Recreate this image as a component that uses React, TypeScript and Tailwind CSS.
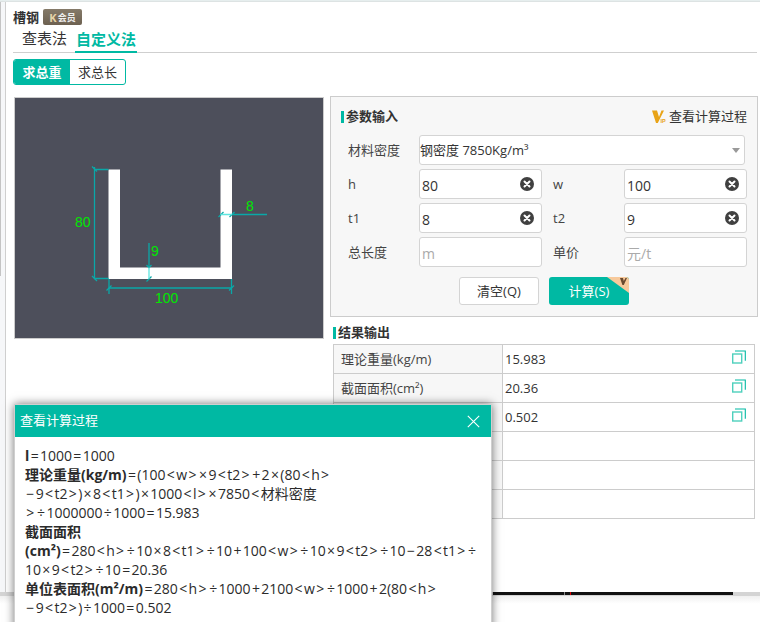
import React from "react";

const FONT = { fontFamily: '"Open Sans", "Noto Sans CJK SC", sans-serif' };

function ClearIcon() {
  return (
    <svg width="14" height="14" viewBox="0 0 14 14" className="shrink-0">
      <circle cx="7" cy="7" r="7" fill="#404040" />
      <path d="M4.500 4.500l5 5M9.500 4.500l-5 5" stroke="#fff" strokeWidth="2" strokeLinecap="round" />
    </svg>
  );
}

function CopyIcon() {
  return (
    <svg width="14" height="14" viewBox="0 0 14 14" fill="none" className="shrink-0">
      <rect x="0.700" y="4" width="9" height="9" stroke="#4fd0bd" strokeWidth="1.400" />
      <path d="M3 1h10.300v9.800" stroke="#00b9a3" strokeWidth="1.100" />
    </svg>
  );
}

function VipIcon() {
  return (
    <svg width="15" height="14" viewBox="0 0 15 14">
      <path d="M0 0.500h5l2 6.500L9.500 0.500h2.500L5.800 13H4z" fill="#e8a317" />
      <text x="8.600" y="13" fontSize="5.500" fontWeight="700" fill="#e8a317" fontFamily="Liberation Sans, sans-serif">IP</text>
    </svg>
  );
}

function Ex({ s }: { s: string }) {
  return (
    <>
      {s.split(/([<>×÷+=−])/).map((p, i) =>
        i % 2 === 1 ? (
          <span key={i} className="px-[1.350px]">{p}</span>
        ) : (
          <span key={i}>{p}</span>
        )
      )}
    </>
  );
}

function Field({ value, placeholder, clear = true }: { value?: string; placeholder?: string; clear?: boolean }) {
  return (
    <div className="w-[123px] h-[30px] bg-white border border-[#d4d4d4] rounded-[3px] flex items-center pl-[2px] pr-[7px] justify-between">
      {value ? (
        <span className="text-[14px] text-[#333] pt-[2px]">{value}</span>
      ) : (
        <span className="text-[14px] text-[#aaa] pt-[2px]">{placeholder}</span>
      )}
      {clear && <ClearIcon />}
    </div>
  );
}

function FieldRow({ l1, f1, l2, f2 }: { l1: string; f1: React.ReactNode; l2: string; f2: React.ReactNode }) {
  return (
    <div className="flex items-center h-[30px]">
      <span className="w-[71px] pt-[2px] text-[13px] text-[#444] shrink-0">{l1}</span>
      {f1}
      <span className="w-[82px] pl-[11px] pt-[2px] text-[13px] text-[#444] shrink-0">{l2}</span>
      {f2}
    </div>
  );
}

function Diagram() {
  const teal = "#0aa8a8";
  const green = "#00e800";
  return (
    <svg width="308" height="240" viewBox="15 98 308 240" className="block">
      <path d="M108.500 169.500H120V267.500H220.500V169.500H232V279H108.500Z" fill="#fff" />
      <g stroke={teal} strokeWidth="1.300" fill="none">
        <path d="M94.500 167V279M94 169.500H108.500M94 278.500H108.500" />
        <path d="M92 166.500l5 5M92 276l5 5" />
        <path d="M109 279V294M231.500 279V294M109 288H231.500" />
        <path d="M106.500 290.500l5-5M229 290.500l5-5" />
        <path d="M149 243V267" />
        <path d="M146.500 265l2.500 2.500 2.500-2.500M146.500 281.500l5-5" />
        <path d="M232 214.500H267M218.500 217l5-5M229.500 217l5-5" />
      </g>
      <g stroke="#5ee6e0" strokeWidth="1.300" fill="none">
        <path d="M149 267.500V279M220.500 214.500H232" />
      </g>
      <g fill={green} fontSize="14" fontFamily="Liberation Sans, sans-serif">
        <text x="75" y="227">80</text>
        <text x="155" y="303">100</text>
        <text x="151" y="256">9</text>
        <text x="246" y="211">8</text>
      </g>
    </svg>
  );
}

function SectionTitle({ children }: { children: React.ReactNode }) {
  return (
    <div className="flex items-center gap-[2px] text-[13px] font-bold text-[#333]">
      <span className="w-[3px] h-[12px] bg-[#00b9a3]" />
      {children}
    </div>
  );
}

const results = [
  ["理论重量(kg/m)", "15.983"],
  ["截面面积(cm²)", "20.36"],
  ["单位表面积(m²/m)", "0.502"],
  ["", ""],
  ["", ""],
  ["", ""],
];

export default function App() {
  return (
    <div className="relative w-[760px] h-[622px] overflow-hidden bg-white text-[#333] flex flex-col" style={FONT}>
      <div className="h-[2px] shrink-0 bg-[#e6eeee] border-b border-[#dde3e3]" />
      <div className="flex h-[590px] shrink-0">
        <div className="w-[6px] shrink-0 bg-[#f6f7f9] border-r border-[#cfcfcf] flex">
          <div className="w-[1px] h-[274px] bg-[#c4c4c4]" />
        </div>
        <div className="flex-1 pl-[7px] pr-[3px] flex flex-col min-w-0">
          {/* title */}
          <div className="flex items-center gap-[4px] h-[16px] mt-[7px]">
            <span className="text-[13px] font-bold text-[#333] leading-none">槽钢</span>
            <span className="w-[39px] h-[16px] rounded-[2px] bg-gradient-to-b from-[#857a69] to-[#6d6151] flex items-center justify-center gap-[1px] text-white">
              <span className="text-[11px] font-bold text-[#e6d3a6] leading-none">K</span>
              <span className="text-[9px] font-bold leading-none text-[#eee]">会员</span>
            </span>
          </div>
          {/* tabs */}
          <div className="flex items-end h-[27px] border-b border-[#cfcfcf] pl-[9px] mt-[1px]">
            <span className="text-[15px] h-[27px] leading-[27px] text-[#333] w-[53px]">查表法</span>
            <span className="text-[15px] h-[27px] leading-[27px] font-bold text-[#00b9a3] border-b-2 border-[#00b9a3] w-[62px] text-center -mb-px">自定义法</span>
          </div>
          {/* toggle */}
          <div className="flex w-[113px] h-[26px] mt-[6px] rounded-[3px] border border-[#00b9a3] overflow-hidden text-[13px]">
            <span className="w-[56px] pt-[2px] bg-[#00b9a3] text-white font-bold flex items-center justify-center">求总重</span>
            <span className="flex-1 pt-[2px] flex items-center justify-center text-[#333]">求总长</span>
          </div>
          {/* body */}
          <div className="flex mt-[11px]">
            <div className="ml-[1px] w-[310px] h-[242px] mt-[1px] border border-[#ccc] bg-[#4d4f5b] shrink-0">
              <Diagram />
            </div>
            <div className="ml-[6px] flex-1 min-w-0">
              <div className="w-[428px] h-[221px] border border-[#ccc] bg-[#f7f7f7] pl-[10px] pt-[14px]">
                <div className="flex items-center justify-between pr-[10px] h-[12px]">
                  <SectionTitle>参数输入</SectionTitle>
                  <div className="flex items-center gap-[2px] text-[13px] text-[#333]">
                    <VipIcon />
                    查看计算过程
                  </div>
                </div>
                <div className="pl-[7px] mt-[12px] flex flex-col gap-[4px]">
                  <div className="flex items-center h-[30px]">
                    <span className="w-[71px] pt-[2px] text-[13px] text-[#444] shrink-0">材料密度</span>
                    <div className="w-[326px] h-[30px] bg-white border border-[#d4d4d4] rounded-[3px] flex items-center justify-between pr-[3px] text-[13px] text-[#333]">
                      <span className="pt-[2px]">钢密度 7850Kg/m³</span>
                      <span className="w-0 h-0 mr-[1px] border-x-[4px] border-x-transparent border-t-[5px] border-t-[#999]" />
                    </div>
                  </div>
                  <FieldRow l1="h" f1={<Field value="80" />} l2="w" f2={<Field value="100" />} />
                  <FieldRow l1="t1" f1={<Field value="8" />} l2="t2" f2={<Field value="9" />} />
                  <FieldRow l1="总长度" f1={<Field placeholder="m" clear={false} />} l2="单价" f2={<Field placeholder="元/t" clear={false} />} />
                </div>
                <div className="flex justify-center gap-[10px] mt-[10px] pr-[10px]">
                  <button className="w-[80px] h-[28px] pt-[2px] bg-white border border-[#d4d4d4] rounded-[3px] text-[13px] text-[#333]">清空(Q)</button>
                  <button className="relative w-[80px] h-[28px] pt-[2px] bg-[#00b9a3] rounded-[3px] text-[13px] text-white overflow-hidden">
                    计算(S)
                    <svg width="22" height="16" viewBox="0 0 22 16" className="absolute top-0 right-0">
                      <path d="M0 0H22V16Z" fill="#f7c99b" />
                      <path d="M13 1h3l.8 3L18.500 1h1.500l-3.200 7h-1.400z" fill="#6b4a2f" />
                    </svg>
                  </button>
                </div>
              </div>
              {/* results */}
              <div className="ml-[3px] mt-[6px] h-[12px]">
                <SectionTitle>结果输出</SectionTitle>
              </div>
              <div className="ml-[3px] mt-[9px] w-[422px] border border-[#ccc] border-b-0">
                {results.map((r, i) => (
                  <div key={i} className="flex h-[29px] border-b border-[#ccc] text-[13px]">
                    <div className="w-[169px] pt-[2px] bg-[#f7f7f7] border-r border-[#ccc] pl-[7px] flex items-center text-[#444]">{r[0]}</div>
                    <div className="flex-1 pl-[2px] pr-[8px] flex items-center justify-between text-[#333]">
                      <span className="pt-[2px]">{r[1]}</span>
                      {r[1] && <span className="-mt-[4px]"><CopyIcon /></span>}
                    </div>
                  </div>
                ))}
              </div>
            </div>
          </div>
        </div>
      </div>
      {/* bottom strip behind dialog */}
      <div className="flex h-[4px] shrink-0 bg-[#d4d4d4]">
        <div className="ml-[493px] w-[240px] h-[3px] bg-[#111] flex items-start">
          <span className="ml-[71px] w-[1px] h-[3px] bg-[#888]" />
          <span className="ml-[5px] w-[1px] h-[3px] bg-[#d00]" />
        </div>
      </div>
      <div className="h-[26px] bg-gradient-to-b from-[#f0f0f0] to-white to-[30%]" />

      {/* dialog */}
      <div className="absolute left-[14px] top-[404px] w-[478px] h-[240px] bg-white border border-[#cfcfcf] shadow-[0_0_9px_rgba(0,0,0,0.55)]">
        <div className="h-[32px] bg-[#00b9a3] flex items-center justify-between pl-[5px] pr-[11px] text-white text-[13px]">
          <span>查看计算过程</span>
          <svg width="13" height="13" viewBox="0 0 13 13" stroke="#fff" strokeWidth="1.100" fill="none">
            <path d="M.8.8l11.400 11.400M12.200.8L.8 12.200" />
          </svg>
        </div>
        <div className="pl-[10px] pt-[9px] text-[14px] leading-[19px] text-[#2b2b2b] whitespace-nowrap">
          <div><b>l</b><Ex s="=1000=1000" /></div>
          <div><b>理论重量(kg/m)</b><Ex s="=(100<w>×9<t2>+2×(80<h>" /></div>
          <div><Ex s="−9<t2>)×8<t1>)×1000<l>×7850<材料密度" /></div>
          <div><Ex s=">÷1000000÷1000=15.983" /></div>
          <div><b>截面面积</b></div>
          <div><b>(cm²)</b><Ex s="=280<h>÷10×8<t1>÷10+100<w>÷10×9<t2>÷10−28<t1>÷" /></div>
          <div><Ex s="10×9<t2>÷10=20.36" /></div>
          <div><b>单位表面积(m²/m)</b><Ex s="=280<h>÷1000+2100<w>÷1000+2(80<h>" /></div>
          <div><Ex s="−9<t2>)÷1000=0.502" /></div>
        </div>
      </div>
    </div>
  );
}
